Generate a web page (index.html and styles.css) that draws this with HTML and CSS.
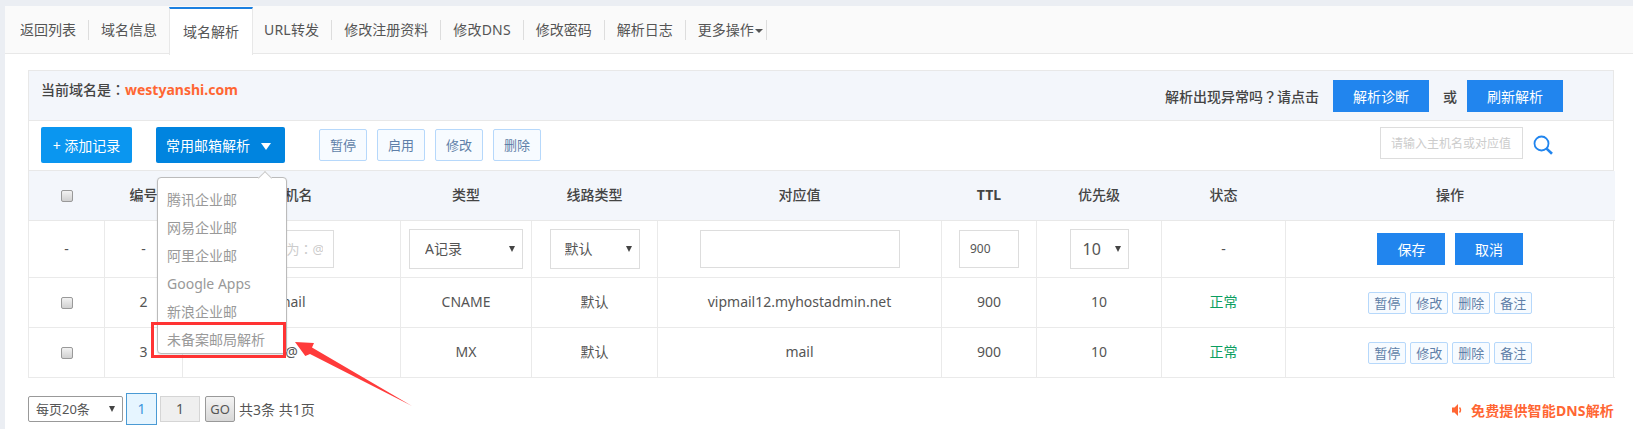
FILE: index.html
```html
<!DOCTYPE html>
<html lang="zh-CN">
<head>
  <meta charset="UTF-8">
  <title>域名解析</title>
  <link rel="stylesheet" href="styles.css">
</head>
<body>
  <div class="panel">
    <div class="tabs">
      <a class="tab">返回列表</a>
      <a class="tab">域名信息</a>
      <a class="tab active">域名解析</a>
      <a class="tab latin">URL转发</a>
      <a class="tab">修改注册资料</a>
      <a class="tab latin">修改DNS</a>
      <a class="tab">修改密码</a>
      <a class="tab">解析日志</a>
      <a class="tab more">更多操作<i class="caret"></i></a>
    </div>

    <div class="content">
      <div class="box">
        <div class="box-head">
          <div class="cur-domain">当前域名是<span class="mark" lang="zh-TW">：</span><span class="orange">westyanshi.com</span></div>
          <div class="diag">
            <span>解析出现异常吗<span class="mark" lang="zh-TW">？</span>请点击</span>
            <button class="btn-blue wide">解析诊断</button>
            <span class="or">或</span>
            <button class="btn-blue wide">刷新解析</button>
          </div>
        </div>

        <div class="toolbar">
          <button class="btn-add">+ 添加记录</button>
          <div class="mail-menu">
            <button class="btn-mail">常用邮箱解析<i class="caret-white"></i></button>
            <div class="popup">
              <a>腾讯企业邮</a>
              <a>网易企业邮</a>
              <a>阿里企业邮</a>
              <a>Google Apps</a>
              <a>新浪企业邮</a>
              <a>未备案邮局解析</a>
            </div>
          </div>
          <div class="batch">
            <button class="btn-line big">暂停</button>
            <button class="btn-line big">启用</button>
            <button class="btn-line big">修改</button>
            <button class="btn-line big">删除</button>
          </div>
          <div class="search">
            <input class="search-input" type="text" placeholder="请输入主机名或对应值">
            <svg class="search-icon" viewBox="0 0 20 20" width="20" height="20">
              <circle cx="8.5" cy="8.5" r="7" fill="none" stroke="#2185ee" stroke-width="1.8"/>
              <path d="M13.6 13.6L19 18.8" stroke="#2185ee" stroke-width="2.6" fill="none"/>
            </svg>
          </div>
        </div>

        <table class="records">
          <colgroup>
            <col class="c1"><col class="c2"><col class="c3"><col class="c4"><col class="c5">
            <col class="c6"><col class="c7"><col class="c8"><col class="c9"><col class="c10">
          </colgroup>
          <thead>
            <tr>
              <th><input class="check" type="checkbox"></th>
              <th>编号</th>
              <th>主机名</th>
              <th>类型</th>
              <th>线路类型</th>
              <th>对应值</th>
              <th class="ttl">TTL</th>
              <th>优先级</th>
              <th>状态</th>
              <th>操作</th>
            </tr>
          </thead>
          <tbody>
            <tr class="edit-row">
              <td>-</td>
              <td>-</td>
              <td><input class="field host" type="text" lang="zh-TW" placeholder="默认为：@"></td>
              <td><span class="select-wrap"><select class="pick type"><option>A记录</option></select></span></td>
              <td><span class="select-wrap"><select class="pick line"><option>默认</option></select></span></td>
              <td><input class="field value" type="text"></td>
              <td><input class="field ttl-input" type="text" value="900"></td>
              <td><span class="select-wrap"><select class="pick prio"><option>10</option></select></span></td>
              <td>-</td>
              <td>
                <button class="btn-blue save">保存</button>
                <button class="btn-blue save">取消</button>
              </td>
            </tr>
            <tr>
              <td><input class="check" type="checkbox"></td>
              <td>2</td>
              <td>mail</td>
              <td>CNAME</td>
              <td>默认</td>
              <td>vipmail12.myhostadmin.net</td>
              <td>900</td>
              <td>10</td>
              <td class="ok">正常</td>
              <td>
                <div class="ops">
                  <button class="btn-line">暂停</button>
                  <button class="btn-line">修改</button>
                  <button class="btn-line">删除</button>
                  <button class="btn-line">备注</button>
                </div>
              </td>
            </tr>
            <tr>
              <td><input class="check" type="checkbox"></td>
              <td>3</td>
              <td>@</td>
              <td>MX</td>
              <td>默认</td>
              <td>mail</td>
              <td>900</td>
              <td>10</td>
              <td class="ok">正常</td>
              <td>
                <div class="ops">
                  <button class="btn-line">暂停</button>
                  <button class="btn-line">修改</button>
                  <button class="btn-line">删除</button>
                  <button class="btn-line">备注</button>
                </div>
              </td>
            </tr>
          </tbody>
        </table>
      </div>

      <div class="pager">
        <span class="select-wrap"><select class="pick per-page"><option>每页20条</option></select></span>
        <span class="page-cur">1</span>
        <span class="page-num">1</span>
        <button class="page-go">GO</button>
        <span class="page-info">共3条 共1页</span>
        <div class="promo">
          <svg viewBox="0 0 10 14" width="10" height="14">
            <path d="M0 4.5H2.5L6 1V13L2.5 9.5H0Z" fill="#ff6633"/>
            <path d="M7.5 4.5Q9.5 7 7.5 9.500" fill="none" stroke="#ff6633" stroke-width="1.4"/>
          </svg>
          <span>免费提供智能DNS解析</span>
        </div>
      </div>
    </div>
  </div>

  <!-- annotation drawn over the screenshot -->
  <div class="mark-box"></div>
  <svg class="mark-arrow" viewBox="0 0 120 66" width="120" height="66">
    <polygon points="1,2 20,3 18,7.500 118,66 16,14 11.300,16" fill="#ff3b3b"/>
  </svg>
</body>
</html>
```

FILE: styles.css
```css
* {
  box-sizing: border-box;
}
body {
  margin: 0;
  height: 429px;
  overflow: hidden;
  padding: 6px 0 0 5px;
  background: #ebeef3;
  font-family: "Noto Sans", "Noto Sans CJK SC", sans-serif;
  font-size: 14px;
  color: #555;
  position: relative;
}
button, input, select {
  font-family: inherit;
  outline: none;
}
button {
  cursor: pointer;
}
.panel {
  background: #fff;
  height: 423px;
}

/* tabs */
.tabs {
  height: 48px;
  display: flex;
  align-items: center;
  padding-left: 3px;
  background: #fafafa;
  border-bottom: 1px solid #e8e8e8;
}
.tab {
  height: 20px;
  line-height: 20px;
  padding: 0 12px;
  border-right: 1px solid #ddd;
  color: #555;
  white-space: nowrap;
}
.tab.latin {
  letter-spacing: .2px;
}
.tab.active {
  height: 48px;
  line-height: 46px;
  margin: 0 -1px 0 -1px;
  padding: 0 13px;
  background: #fff;
  border-top: 2px solid #1a7fe0;
  border-left: 1px solid #e8e8e8;
  border-right: 1px solid #e8e8e8;
  position: relative;
  top: 1px;
}
.tab.more {
  padding-right: 3px;
}
.caret {
  display: inline-block;
  margin-left: 1px;
  vertical-align: middle;
  border: 4px solid transparent;
  border-top: 4px solid #555;
  border-bottom: 0;
}

/* record box */
.content {
  padding: 16px 19px 0 23px;
}
.box {
  border: 1px solid #e8e8e8;
  border-bottom: 0;
}
.box-head {
  height: 50px;
  display: flex;
  justify-content: space-between;
  background: #f3f6fb;
  padding-left: 12px;
  border-bottom: 1px solid #e8e8e8;
}
.cur-domain {
  font-weight: 500;
  color: #444;
  line-height: 36px;
}
/* centred full-width punctuation */
.mark {
  font-family: "Noto Sans CJK TC", sans-serif;
}
.orange {
  color: #ff6633;
  font-weight: 700;
}
.diag {
  display: flex;
  align-items: center;
  padding-right: 50px;
  height: 49px;
  font-weight: 500;
  color: #444;
}
.or {
  margin: 0 10px 0 14px;
}
.btn-blue {
  border: 0;
  background: #2185ee;
  color: #fff;
  font-size: 14px;
}
.btn-blue.wide {
  width: 96px;
  height: 32px;
  margin-left: 14px;
}
.or + .btn-blue.wide {
  margin-left: 0;
}

/* toolbar */
.toolbar {
  height: 50px;
  display: flex;
  align-items: flex-start;
  padding: 6px 0 0 12px;
  border-bottom: 1px solid #e8e8e8;
}
.btn-add, .btn-mail {
  height: 36px;
  border: 0;
  border-radius: 2px;
  color: #fff;
  font-size: 14px;
}
.btn-add {
  width: 91px;
  background: #0a96f0;
}
.mail-menu {
  position: relative;
  margin-left: 24px;
}
.btn-mail {
  width: 129px;
  background: #0084df;
  text-align: left;
  padding-left: 10px;
}
.caret-white {
  display: inline-block;
  margin-left: 11px;
  vertical-align: 1px;
  border: 5px solid transparent;
  border-top: 7px solid #fff;
  border-bottom: 0;
}
.popup {
  position: absolute;
  z-index: 5;
  left: 1px;
  top: 50px;
  width: 130px;
  height: 177px;
  padding-top: 8px;
  background: #fff;
  border: 1px solid #bbb;
  border-radius: 4px;
  box-shadow: 0 1px 2px rgba(0,0,0,.12);
}
.popup::before {
  content: "";
  position: absolute;
  right: 16px;
  top: -5px;
  width: 9px;
  height: 9px;
  background: #fff;
  border-left: 1px solid #ccc;
  border-top: 1px solid #ccc;
  transform: rotate(45deg);
}
.popup a {
  display: block;
  height: 28px;
  line-height: 28px;
  padding-left: 9px;
  color: #999;
  white-space: nowrap;
}
.batch {
  display: flex;
  gap: 10px;
  margin: 2px 0 0 34px;
}
.btn-line {
  width: 38px;
  height: 22px;
  padding: 0;
  border: 1px solid #b6d8fb;
  border-radius: 2px;
  background: #f7fbff;
  color: #5f7fa8;
  font-size: 13px;
  line-height: 18px;
}
.btn-line.big {
  width: 48px;
  height: 32px;
}
.search {
  display: flex;
  margin-left: auto;
  padding-right: 60px;
}
.search-input {
  width: 143px;
  height: 32px;
  border: 1px solid #ddd;
  padding: 0 10px;
  font-size: 12px;
}
.search-input::placeholder {
  color: #ccc;
}
.search-icon {
  margin: 8px 0 0 10px;
}

/* table */
.records {
  width: 1586px;
  margin-left: -1px;
  table-layout: fixed;
  border-collapse: collapse;
}
.c1 { width: 76px; }
.c2 { width: 78px; }
.c3 { width: 218px; }
.c4 { width: 131px; }
.c5 { width: 126px; }
.c6 { width: 284px; }
.c7 { width: 95px; }
.c8 { width: 125px; }
.c9 { width: 124px; }
.c10 { width: 329px; }
.records th {
  height: 49px;
  padding: 0 0 2px;
  background: #f3f6fb;
  color: #444;
  font-weight: 500;
  font-size: 14px;
  border-bottom: 1px solid #e8e8e8;
}
.records th.ttl {
  font-weight: 700;
}
.records td {
  height: 50px;
  padding: 0 0 2px;
  text-align: center;
  border: 1px solid #eaeaea;
  border-top: 0;
  border-left: 0;
}
.records td:first-child {
  border-left: 1px solid #eaeaea;
}
.records td:last-child {
  border-right: 0;
}
.edit-row td {
  height: 57px;
  padding: 0;
}
.check {
  appearance: none;
  display: inline-block;
  vertical-align: middle;
  width: 12px;
  height: 12px;
  margin: 0;
  border: 1px solid #999;
  border-radius: 2px;
  background: linear-gradient(#f2f2f2, #d0d0d0);
}
.field {
  height: 38px;
  border: 1px solid #ddd;
  vertical-align: middle;
  padding: 0 10px;
  font-size: 13px;
  color: #555;
}
.field::placeholder {
  color: #ccc;
}
.field.host {
  width: 84px;
  font-family: "Noto Sans", "Noto Sans CJK TC", sans-serif;
}
.field.value {
  width: 200px;
}
.field.ttl-input {
  width: 60px;
  font-size: 12px;
}
.select-wrap {
  display: inline-block;
  position: relative;
  vertical-align: middle;
}
.select-wrap::after {
  content: "";
  position: absolute;
  right: 8px;
  top: 50%;
  margin-top: -3px;
  border: 3.5px solid transparent;
  border-top: 6px solid #444;
  border-bottom: 0;
}
.pick {
  appearance: none;
  display: block;
  height: 40px;
  border: 1px solid #ddd;
  border-radius: 0;
  background: #fff;
  padding: 0 0 0 14px;
  font-size: 14px;
  color: #555;
}
.pick.type {
  width: 114px;
  padding-left: 15px;
}
.pick.line {
  width: 90px;
}
.pick.prio {
  width: 59px;
  padding-left: 12px;
  font-size: 16px;
}
.save {
  width: 68px;
  height: 32px;
  margin: 0 3px;
}
.ok {
  color: #0a9e60;
}
.ops {
  display: flex;
  justify-content: center;
  gap: 4px;
  padding-top: 3px;
}

/* pager */
.pager {
  display: flex;
  align-items: center;
  height: 32px;
  margin-top: 15px;
}
.pick.per-page {
  width: 95px;
  height: 26px;
  border-color: #999;
  border-radius: 2px;
  padding-left: 7px;
  font-size: 13px;
}
.page-cur {
  width: 31px;
  height: 32px;
  line-height: 30px;
  margin-left: 3px;
  text-align: center;
  background: #e6f5ff;
  border: 1px solid #4a9ad4;
  color: #3c96dc;
}
.page-num {
  width: 40px;
  height: 26px;
  line-height: 24px;
  margin-left: 3px;
  text-align: center;
  background: #efefef;
  border: 1px solid #d5d5d5;
}
.page-go {
  width: 30px;
  height: 26px;
  margin-left: 5px;
  padding: 0;
  font-size: 13px;
  color: #555;
  border: 1px solid #999;
  border-radius: 2px;
  background: linear-gradient(#f4f4f4, #d8d8d8);
}
.page-info {
  margin-left: 4px;
}
.promo {
  display: flex;
  align-items: center;
  gap: 9px;
  margin-left: auto;
  padding-top: 2px;
  color: #ff6633;
  font-weight: 700;
  letter-spacing: .15px;
  white-space: nowrap;
}

/* red annotation */
.mark-box {
  position: absolute;
  left: 151px;
  top: 322px;
  width: 135px;
  height: 36px;
  border: 3px solid #f33;
  z-index: 6;
}
.mark-arrow {
  position: absolute;
  left: 294px;
  top: 340px;
  z-index: 6;
}
```
